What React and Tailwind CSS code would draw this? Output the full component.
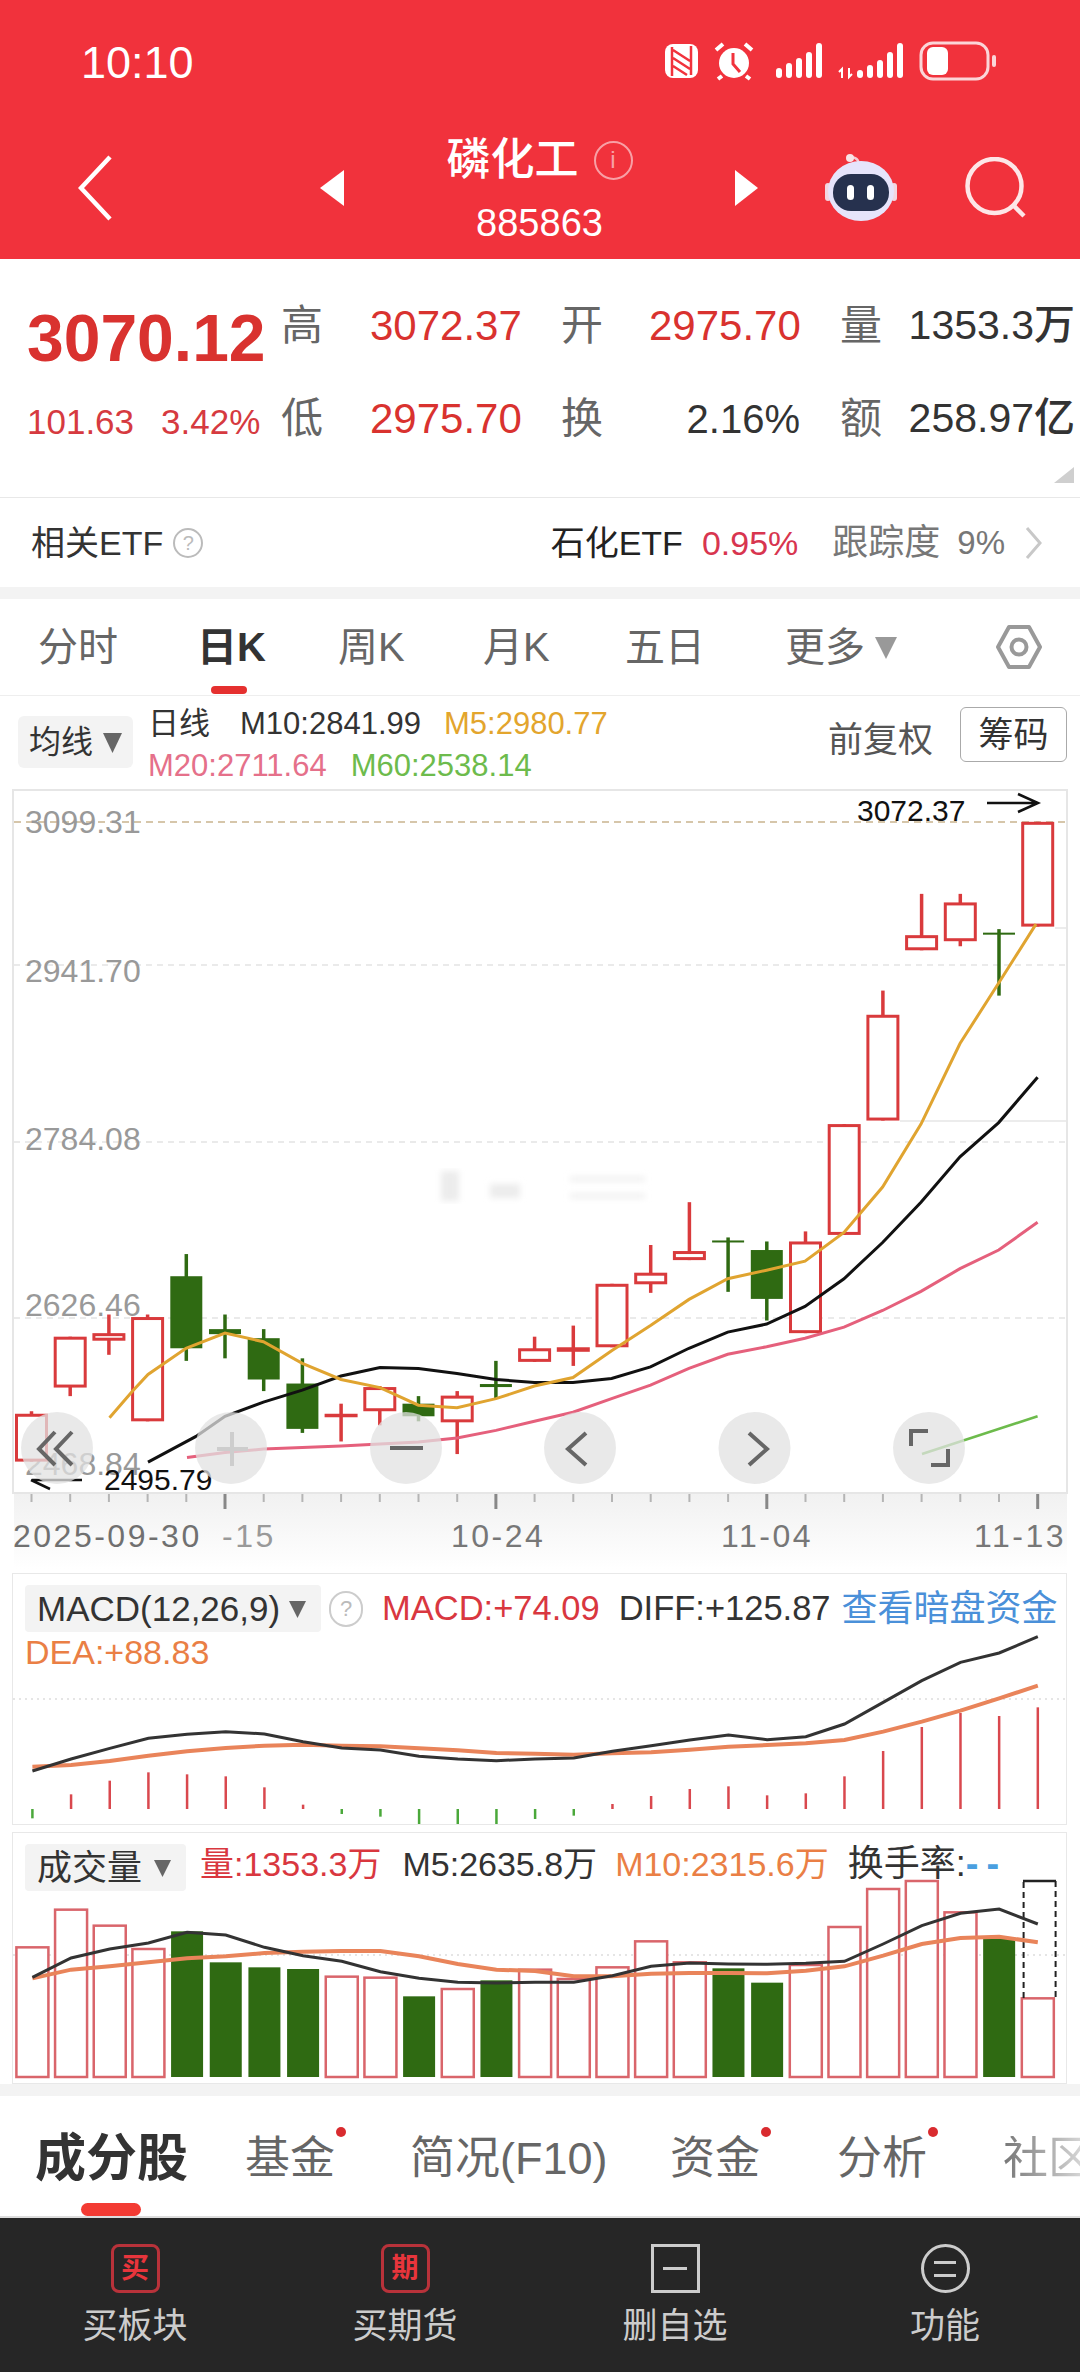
const RED = "#d93a3c";
const GREEN = "#2f6a12";

// y on the k-line chart, measured from the chart top in a 1.985x crop
const ky = (z) => 780 + z / 1.985;
const kx = (i) => 31.5 + 38.7 * i;
// lower panels share the same x grid
const px = (i) => 32.4 + 38.67 * i;
const py = (z) => 1560 + z / 3;

// [bodyTop, bodyBottom, wickTop, wickBottom, up]
const candles = [
  [1260, 1355, 1255, 1355, 1],
  [1107, 1208, 1107, 1225, 1],
  [1100, 1115, 1063, 1143, 1],
  [1068, 1275, 1063, 1275, 1],
  [987, 1130, 943, 1155, 0],
  [1092, 1102, 1063, 1150, 0],
  [1110, 1192, 1092, 1215, 0],
  [1200, 1290, 1150, 1298, 0],
  [1260, 1265, 1240, 1315, 1],
  [1207, 1255, 1205, 1283, 1],
  [1240, 1265, 1225, 1275, 0],
  [1224, 1277, 1215, 1340, 1],
  [1201, 1207, 1155, 1230, 0],
  [1130, 1157, 1107, 1157, 1],
  [1128, 1137, 1085, 1165, 1],
  [1002, 1128, 1002, 1128, 1],
  [980, 1003, 925, 1020, 1],
  [937, 955, 840, 955, 1],
  [916, 920, 910, 1018, 0],
  [935, 1032, 918, 1075, 0],
  [918, 1100, 898, 1100, 1],
  [685, 905, 685, 905, 1],
  [468, 678, 420, 678, 1],
  [310, 340, 228, 340, 1],
  [245, 322, 228, 332, 1],
  [305, 309, 298, 430, 0],
  [85, 293, 85, 293, 1],
];

const m5 = [
  [109.5, 1268], [132.6, 1215], [148, 1182], [186, 1130], [225, 1100], [263.4, 1117], [302.3, 1160], [341, 1192], [380, 1208], [418.4, 1243], [457, 1248], [496, 1230], [534.4, 1205],
  [573, 1188], [611.6, 1135], [650.5, 1085], [689, 1033], [727.7, 992], [766.6, 975], [805, 957], [844, 900], [882.6, 810], [921, 685], [960, 525], [998.7, 405], [1036, 288],
];
const m10 = [
  [148, 1356], [196, 1305], [225, 1265], [263.4, 1237], [302.3, 1213], [341, 1185], [380, 1168], [418.4, 1170], [457, 1180], [496, 1192], [534.4, 1198],
  [573, 1198], [611.6, 1190], [650.5, 1167], [689, 1130], [727.7, 1098], [766.6, 1082], [805, 1047], [844, 992], [882.6, 920], [921, 840], [960, 750], [998.7, 682], [1037.6, 592],
];
const m20 = [
  [187, 1347], [225, 1337], [263.4, 1330], [302.3, 1327], [341, 1324], [380, 1320], [418.4, 1316], [457, 1308], [496, 1293], [534.4, 1275],
  [573, 1257], [611.6, 1230], [650.5, 1203], [689, 1170], [727.7, 1142], [766.6, 1127], [805, 1110], [844, 1088], [882.6, 1055], [921, 1017], [960, 972], [998.7, 935], [1037.6, 880],
];
const m60 = [[922, 1340], [1037.6, 1265]];

const macdBars = [-28, 44, 85, 110, 104, 98, 65, 13, -15, -23, -45, -45, -45, -30, -20, 15, 39, 60, 68, 41, 47, 98, 174, 246, 288, 279, 305];
const diff = [636, 600, 568, 538, 526, 518, 525, 548, 567, 573, 592, 600, 605, 600, 597, 577, 560, 543, 528, 542, 533, 495, 430, 365, 310, 282, 233];
const dea = [623, 618, 606, 590, 577, 567, 560, 557, 560, 562, 568, 574, 582, 584, 587, 583, 580, 572, 563, 558, 553, 543, 518, 488, 455, 418, 380];

// [top, up]
const volBars = [
  [1165, 1], [1052, 1], [1100, 1], [1170, 1], [1117, 0], [1210, 0], [1225, 0], [1230, 0], [1253, 1], [1256, 1], [1312, 0], [1290, 1], [1264, 0], [1232, 1],
  [1260, 1], [1225, 1], [1147, 1], [1210, 1], [1228, 0], [1271, 0], [1218, 1], [1104, 1], [990, 1], [966, 1], [1060, 1], [1135, 0], [1318, 1],
];
const volM5 = [1255, 1197, 1170, 1152, 1120, 1128, 1165, 1190, 1207, 1238, 1258, 1270, 1272, 1270, 1270, 1250, 1222, 1212, 1215, 1216, 1213, 1207, 1155, 1100, 1063, 1050, 1095];
const volM10 = [1258, 1232, 1222, 1210, 1198, 1192, 1182, 1178, 1176, 1176, 1192, 1215, 1232, 1236, 1252, 1252, 1244, 1242, 1242, 1243, 1235, 1222, 1190, 1155, 1137, 1133, 1150];

const kPoints = (list) => list.map(([x, z]) => `${x},${ky(z)}`).join(" ");
const panelPoints = (list) => list.map((z, i) => `${px(i)},${py(z)}`).join(" ");

function StatusBar() {
  return (
    <div className="flex h-[124px] items-center">
      <span className="ml-[81px] text-[45px] leading-none text-white">10:10</span>
      <svg className="ml-auto mr-[80px] block" width="340" height="44" viewBox="660 40 340 44">
        {/* nfc */}
        <rect x="665" y="44" width="33" height="34" rx="8" fill="#fff" />
        <path d="M672 76V47M691 75V46M673 50l17 11M673 58l17 11M673 66l14 9" stroke="#f1323c" strokeWidth="2.5" fill="none" />
        {/* alarm */}
        <circle cx="734" cy="63" r="15" fill="#fff" />
        <path d="M733 53v11l7 8" stroke="#f1323c" strokeWidth="3" fill="none" />
        <path d="M716 50l7-6M752 50l-7-6M722 76l-4 3M746 76l4 3" stroke="#fff" strokeWidth="4" fill="none" />
        {/* signal */}
        {[[779, 68], [789, 63], [799, 58], [809, 52], [819, 43]].map(([x, y]) => (
          <rect key={x} x={x - 3} y={y} width="6" height={78 - y} rx="3" fill="#fff" />
        ))}
        <path d="M842 78V69l-3 3M849 68v9l3-3" stroke="#fff" strokeWidth="2" fill="none" />
        {[[860, 70], [870, 65], [880, 60], [890, 52], [900, 43]].map(([x, y]) => (
          <rect key={x} x={x - 3} y={y} width="6" height={78 - y} rx="3" fill="#fff" />
        ))}
        {/* battery */}
        <rect x="921" y="43" width="67" height="36" rx="12" fill="none" stroke="#fbd5d8" strokeWidth="3" />
        <rect x="927" y="47" width="21" height="28" rx="6" fill="#fff" />
        <rect x="992" y="55" width="4" height="12" rx="2" fill="#fbd5d8" />
      </svg>
    </div>
  );
}

function RobotIcon() {
  return (
    <svg width="72" height="70" viewBox="825 150 72 70" className="block">
      <path d="M850 156c3-3 8-1 9 5" stroke="#f6c9d2" strokeWidth="2.5" fill="none" />
      <circle cx="850" cy="155" r="4" fill="#f8e3e6" />
      <rect x="825" y="180" width="6" height="18" rx="3" fill="#f3d6e0" />
      <rect x="891" y="180" width="6" height="18" rx="3" fill="#f3d6e0" />
      <ellipse cx="861" cy="188" rx="33" ry="30" fill="#e6e4fb" />
      <rect x="833" y="171" width="56" height="37" rx="18" fill="#26314e" />
      <rect x="847" y="182" width="7" height="15" rx="3.5" fill="#fff" />
      <rect x="867" y="182" width="7" height="15" rx="3.5" fill="#fff" />
    </svg>
  );
}

function Header() {
  return (
    <div className="h-[259px] bg-[#f1323c] text-white">
      <StatusBar />
      <div className="flex h-[135px] items-center pb-[8px]">
        <svg className="ml-[78px] block" width="34" height="66" viewBox="0 0 34 66">
          <path d="M32 2L3 33l29 31" fill="none" stroke="#fff" strokeWidth="4.5" />
        </svg>
        <svg className="ml-[208px] block" width="24" height="36" viewBox="0 0 24 36">
          <path d="M24 0v36L0 18z" fill="#fff" />
        </svg>
        <div className="flex w-[391px] flex-col items-center self-start pt-[11px]">
          <div className="flex h-[50px] items-center">
            <span className="text-[44px] font-medium leading-none">磷化工</span>
            <span className="ml-[15px] flex h-[39px] w-[39px] items-center justify-center rounded-full border-2 border-[#f8a0a6] text-[24px] leading-none text-[#f8a0a6]">
              i
            </span>
          </div>
          <span className="mt-[13px] text-[38px] leading-[50px]">885863</span>
        </div>
        <svg className="block" width="23" height="36" viewBox="0 0 23 36">
          <path d="M0 0v36l23-18z" fill="#fff" />
        </svg>
        <div className="ml-[67px]">
          <RobotIcon />
        </div>
        <svg className="ml-[68px] block" width="62" height="62" viewBox="0 0 62 62">
          <circle cx="29.5" cy="29" r="27" fill="none" stroke="#fde6e7" strokeWidth="4.5" />
          <path d="M48 48l11 11" stroke="#fde6e7" strokeWidth="4.5" />
        </svg>
      </div>
    </div>
  );
}

function Stat({ label, value, color, width = "w-[151px]", size = "text-[42px]" }) {
  return (
    <>
      <span className="text-[42px] leading-none text-[#666]">{label}</span>
      <span className={`${width} text-right ${size} font-medium leading-none ${color}`}>{value}</span>
    </>
  );
}

function Stats() {
  return (
    <div className="relative flex h-[239px] border-b border-[#e8e8e8]">
      <div className="ml-[27px] w-[254px] pt-[44px]">
        <div className="text-[66px] font-bold leading-[70px] text-[#d9322f]">3070.12</div>
        <div className="mt-[27px] flex text-[35px] font-medium leading-[44px] text-[#d63a40]">
          <span>101.63</span>
          <span className="ml-[27px]">3.42%</span>
        </div>
      </div>
      <div className="grid h-[206px] grid-cols-[89px_151px_40px_88px_151px_40px_60px_175px] grid-rows-2 items-center pt-[20px]">
        <Stat label="高" value="3072.37" color="text-[#d9322f]" />
        <span />
        <Stat label="开" value="2975.70" color="text-[#d9322f]" />
        <span />
        <Stat label="量" value="1353.3万" color="text-[#333]" width="w-[175px]" size="text-[41px]" />
        <Stat label="低" value="2975.70" color="text-[#d9322f]" />
        <span />
        <Stat label="换" value="2.16%" color="text-[#333]" size="text-[40px]" />
        <span />
        <Stat label="额" value="258.97亿" color="text-[#333]" width="w-[175px]" size="text-[41px]" />
      </div>
      <svg className="absolute bottom-[14px] right-[6px] block" width="20" height="16" viewBox="0 0 20 16">
        <path d="M20 0v16H0z" fill="#cfcfcf" />
      </svg>
    </div>
  );
}

function EtfRow() {
  return (
    <div className="flex h-[89px] items-center pl-[31px] pr-[38px]">
      <span className="text-[34px] leading-none text-[#333]">相关ETF</span>
      <span className="ml-[10px] flex h-[30px] w-[30px] items-center justify-center rounded-full border-2 border-[#bbb] text-[20px] leading-none text-[#bbb]">
        ?
      </span>
      <span className="ml-auto text-[34px] leading-none text-[#222]">石化ETF</span>
      <span className="ml-[19px] text-[34px] leading-none text-[#d8354f]">0.95%</span>
      <span className="ml-[34px] text-[36px] leading-none text-[#777]">跟踪度</span>
      <span className="ml-[17px] text-[33px] leading-none text-[#777]">9%</span>
      <svg className="ml-[20px] block" width="17" height="32" viewBox="0 0 17 32">
        <path d="M2 1l13 15L2 31" fill="none" stroke="#c8c8c8" strokeWidth="3" />
      </svg>
    </div>
  );
}

function PeriodTabs() {
  const tabs = [
    ["分时", "w-[159px]"],
    ["日K", "w-[141px]"],
    ["周K", "w-[145px]"],
    ["月K", "w-[142px]"],
    ["五日", "w-[160px]"],
  ];
  return (
    <div className="flex h-[97px] items-center border-b border-[#eee] pl-[38px]">
      {tabs.map(([name, w]) => (
        <span
          key={name}
          className={`relative ${w} text-[40px] leading-none ${name === "日K" ? "font-bold text-[#333]" : "text-[#666]"}`}
        >
          {name}
          {name === "日K" && (
            <span className="absolute left-[14px] top-[59px] h-[8px] w-[36px] rounded-full bg-[#e5302f]" />
          )}
        </span>
      ))}
      <span className="text-[40px] leading-none text-[#666]">更多</span>
      <svg className="ml-[10px] block" width="22" height="24" viewBox="0 0 22 24">
        <path d="M0 2h22L11 24z" fill="#999" />
      </svg>
      <svg className="ml-[98px] block" width="48" height="46" viewBox="0 0 48 46">
        <path d="M14 3h20l11 20-11 20H14L3 23z" fill="none" stroke="#999" strokeWidth="4" strokeLinejoin="round" />
        <circle cx="24" cy="23" r="7.5" fill="none" stroke="#999" strokeWidth="4" />
      </svg>
    </div>
  );
}

function Legend() {
  return (
    <div className="flex h-[83px] items-start pl-[18px] pr-[13px]">
      <div className="mt-[20px] flex h-[52px] w-[115px] items-center rounded-[6px] bg-[#f3f3f3] pl-[11px]">
        <span className="text-[32px] leading-none text-[#333]">均线</span>
        <svg className="ml-[10px] block" width="19" height="22" viewBox="0 0 19 22">
          <path d="M0 2h19L9.5 22z" fill="#666" />
        </svg>
      </div>
      <div className="ml-[15px] mt-[7px] text-[31px] leading-[42px]">
        <div className="flex">
          <span className="w-[92px] text-[#333]">日线</span>
          <span className="text-[#333]">M10:2841.99</span>
          <span className="ml-[23px] text-[#e3a52d]">M5:2980.77</span>
        </div>
        <div className="flex">
          <span className="text-[#e5708a]">M20:2711.64</span>
          <span className="ml-[24px] text-[#6dbb4c]">M60:2538.14</span>
        </div>
      </div>
      <span className="ml-auto mt-[26px] text-[35px] leading-none text-[#555]">前复权</span>
      <span className="ml-[27px] mt-[11px] flex h-[55px] w-[107px] items-center justify-center rounded-[6px] border border-[#aaa] text-[35px] leading-none text-[#333]">
        筹码
      </span>
    </div>
  );
}

function KChart() {
  const gridY = [966, 1143, 1319];
  const axisLabels = [
    ["3099.31", 834],
    ["2941.70", 983],
    ["2784.08", 1151],
    ["2626.46", 1317],
    ["2468.84", 1476],
  ];
  return (
    <svg className="block" width="1080" height="794" viewBox="0 780 1080 794">
      <defs>
        <linearGradient id="axisBand" x1="0" y1="0" x2="0" y2="1">
          <stop offset="0" stopColor="#f1f1f1" />
          <stop offset="1" stopColor="#fff" />
        </linearGradient>
        <filter id="soft">
          <feGaussianBlur stdDeviation="3" />
        </filter>
      </defs>

      <rect x="13" y="791" width="1054" height="703" fill="#fff" stroke="#e6e6e6" strokeWidth="2" />
      <rect x="14" y="1495" width="1053" height="75" fill="url(#axisBand)" />

      <line x1="14" x2="1066" y1="823" y2="823" stroke="#c9b48e" strokeWidth="1.5" strokeDasharray="7 5" />
      {gridY.map((y) => (
        <line key={y} x1="14" x2="1066" y1={y} y2={y} stroke="#e4e4e4" strokeWidth="1.5" strokeDasharray="6 5" />
      ))}
      <line x1="900" x2="1066" y1="1122" y2="1122" stroke="#e6e6e6" strokeWidth="1.5" />
      <line x1="1055" x2="1066" y1="929" y2="929" stroke="#e6e6e6" strokeWidth="1.5" />

      <g filter="url(#soft)" fill="#ececec">
        <rect x="441" y="1172" width="18" height="30" />
        <rect x="490" y="1185" width="30" height="14" />
        <rect x="570" y="1178" width="75" height="4" />
        <rect x="570" y="1195" width="75" height="4" />
      </g>

      {axisLabels.map(([label, y]) => (
        <text key={label} x="25" y={y} className="fill-[#999] text-[32px] font-medium">
          {label}
        </text>
      ))}

      {candles.map(([top, bottom, high, low, up], i) => {
        const x = kx(i);
        if (!up) {
          return (
            <g key={i}>
              <line x1={x} x2={x} y1={ky(high)} y2={ky(low)} stroke={GREEN} strokeWidth="3.5" />
              <rect x={x - 16} y={ky(top)} width="32" height={ky(bottom) - ky(top)} fill={GREEN} />
            </g>
          );
        }
        return (
          <g key={i}>
            <line x1={x} x2={x} y1={ky(high)} y2={ky(low)} stroke={RED} strokeWidth="3.5" />
            <rect
              x={x - 15}
              y={ky(top) + 1.5}
              width="30"
              height={Math.max(ky(bottom) - ky(top) - 3, 0.5)}
              fill="#fff"
              stroke={RED}
              strokeWidth="3"
            />
          </g>
        );
      })}

      <polyline points={kPoints(m60)} fill="none" stroke="#6dbb4c" strokeWidth="2.5" />
      <polyline points={kPoints(m20)} fill="none" stroke="#e5607c" strokeWidth="3" />
      <polyline points={kPoints(m10)} fill="none" stroke="#111" strokeWidth="3" />
      <polyline points={kPoints(m5)} fill="none" stroke="#e0a430" strokeWidth="3" />

      <text x="857" y="822" className="fill-[#111] text-[30px]">3072.37</text>
      <path d="M987 804h51M1018 795l20 9-20 9" fill="none" stroke="#111" strokeWidth="2.5" />
      <text x="104" y="1491" className="fill-[#111] text-[30px]">2495.79</text>
      <path d="M82 1481H32M50 1490l-19-9" fill="none" stroke="#111" strokeWidth="2.5" />

      {[57, 231, 406, 580, 754.5, 929].map((x) => (
        <circle key={x} cx={x} cy="1449" r="36" fill="#e2e2e2" fillOpacity="0.75" />
      ))}
      <g fill="none" stroke="#666" strokeWidth="4">
        <path d="M55 1433l-16 17 16 16M72 1433l-16 17 16 16" />
        <path d="M217 1450h31M232 1433v34" stroke="#cdcdcd" />
        <path d="M390 1449h33" />
        <path d="M586 1434l-18 16 18 16M749 1434l18 16-18 16" />
        <path d="M911 1447v-15h17M931 1466h17v-16" />
      </g>

      {candles.map((_, i) => {
        const major = i === 5 || i === 12 || i === 19 || i === 26;
        return (
          <line
            key={i}
            x1={kx(i)}
            x2={kx(i)}
            y1="1495"
            y2={major ? 1510 : 1503}
            stroke={major ? "#888" : "#b5b5b5"}
            strokeWidth={major ? 3 : 2}
          />
        );
      })}
      <g className="text-[32px] font-medium tracking-[2.5px]">
        <text x="13" y="1548" className="fill-[#707070]">2025-09-30</text>
        <text x="222" y="1548" className="fill-[#999]">-15</text>
        <text x="451" y="1548" className="fill-[#777]">10-24</text>
        <text x="721" y="1548" className="fill-[#777]">11-04</text>
        <text x="974" y="1548" className="fill-[#777]">11-13</text>
      </g>
    </svg>
  );
}

function Dropdown({ width, children }) {
  return (
    <div className={`flex h-[47px] ${width} items-center justify-between rounded-[4px] bg-[#f3f3f3] pl-[12px] pr-[15px]`}>
      <span className="text-[35px] leading-none text-[#333]">{children}</span>
      <svg className="block" width="17" height="18" viewBox="0 0 17 18">
        <path d="M0 1h17L8.5 18z" fill="#666" />
      </svg>
    </div>
  );
}

function MacdPanel() {
  return (
    <div className="relative mx-[12px] h-[252px] w-[1055px] border border-[#e8e8e8]">
      <svg className="absolute inset-0 block" width="1053" height="250" viewBox="13 1575 1053 250">
        <line x1="13" x2="1066" y1="1700" y2="1700" stroke="#ddd" strokeWidth="1.5" strokeDasharray="2 4" />
        {macdBars.map((h, i) => (
          <line
            key={i}
            x1={px(i)}
            x2={px(i)}
            y1="1810"
            y2={1810 - h / 3}
            stroke={h > 0 ? "#d9484e" : "#4aa83a"}
            strokeWidth="2.5"
          />
        ))}
        <polyline points={panelPoints(dea)} fill="none" stroke="#e9845a" strokeWidth="4" />
        <polyline points={panelPoints(diff)} fill="none" stroke="#333" strokeWidth="3" />
      </svg>
      <div className="relative pl-[12px] pt-[11px]">
        <div className="flex items-center">
          <Dropdown width="w-[296px]">MACD(12,26,9)</Dropdown>
          <span className="ml-[8px] flex h-[36px] w-[34px] items-center justify-center rounded-full border-2 border-[#ccc] text-[22px] leading-none text-[#bbb]">
            ?
          </span>
          <span className="ml-[19px] text-[34.5px] leading-none text-[#d9373f]">MACD:+74.09</span>
          <span className="ml-[19px] text-[34.5px] leading-none text-[#333]">DIFF:+125.87</span>
          <span className="ml-[11px] text-[36px] leading-none text-[#4a90d9]">查看暗盘资金</span>
        </div>
        <div className="mt-[2px] text-[34px] leading-[36px] text-[#ea7f45]">DEA:+88.83</div>
      </div>
    </div>
  );
}

function VolumePanel() {
  return (
    <div className="relative mx-[12px] mt-[7px] h-[252px] w-[1055px] border border-[#e8e8e8]">
      <svg className="absolute inset-0 block" width="1053" height="250" viewBox="13 1834 1053 250">
        <line x1="13" x2="1066" y1="1956" y2="1956" stroke="#ddd" strokeWidth="1.5" strokeDasharray="2 4" />
        {volBars.map(([top, up], i) => (
          <rect
            key={i}
            x={px(i) - 16}
            y={py(top)}
            width="32"
            height={2078 - py(top)}
            fill={up ? "#fff" : GREEN}
            stroke={up ? "#d9656b" : GREEN}
            strokeWidth={up ? 2.5 : 0}
          />
        ))}
        <path d="M1023.6 1999V1882M1055.6 1882V1999" fill="none" stroke="#222" strokeWidth="2" strokeDasharray="6 4" />
        <line x1="1023" x2="1056" y1="1882" y2="1882" stroke="#222" strokeWidth="2.5" />
        <polyline points={panelPoints(volM10)} fill="none" stroke="#e9845a" strokeWidth="4" />
        <polyline points={panelPoints(volM5)} fill="none" stroke="#333" strokeWidth="3" />
      </svg>
      <div className="relative flex items-start pl-[12px] pt-[11px]">
        <Dropdown width="w-[161px]">成交量</Dropdown>
        <div className="ml-[14px] flex pt-[2px] text-[34px] leading-[36px]">
          <span className="text-[#d9373f]">量:1353.3万</span>
          <span className="ml-[21px] text-[#333]">M5:2635.8万</span>
          <span className="ml-[18px] text-[#ea7f45]">M10:2315.6万</span>
          <span className="ml-[19px] text-[36px] text-[#333]">换手率:</span>
          <span className="text-[38px] font-bold tracking-[8px] text-[#4a9fe0]">--</span>
        </div>
      </div>
    </div>
  );
}

function InfoTabs() {
  const tabs = [
    ["基金", "w-[165px]", true],
    ["简况(F10)", "w-[260px]", false],
    ["资金", "w-[167px]", true],
    ["分析", "w-[166px]", true],
  ];
  return (
    <div className="relative flex h-[122px] items-center overflow-hidden border-b-2 border-[#ddd] pl-[35px] pt-[4px]">
      <span className="w-[210px] shrink-0 text-[51px] font-bold leading-none text-[#333]">成分股</span>
      {tabs.map(([name, w, dot]) => (
        <span key={name} className={`relative shrink-0 ${w} text-[45px] leading-none text-[#666]`}>
          {name}
          {dot && <span className="absolute left-[91px] top-[-9px] h-[10px] w-[10px] rounded-full bg-[#d92b2f]" />}
        </span>
      ))}
      <span className="shrink-0 bg-linear-to-r from-[#777] to-[#e5e5e5] bg-clip-text text-[45px] leading-none text-transparent">
        社区
      </span>
      <span className="absolute bottom-0 left-[81px] h-[13px] w-[60px] rounded-full bg-[#f33b33]" />
    </div>
  );
}

function BottomNav() {
  const boxed = "flex h-[49px] w-[49px] items-center justify-center";
  return (
    <div className="grid h-[154px] grid-cols-4 bg-[#262626] pt-[26px] text-[#ccc]">
      <div className="flex flex-col items-center">
        <span className={`${boxed} rounded-[8px] border-[3px] border-[#b8323a] text-[28px] font-bold leading-none text-[#e8353c]`}>买</span>
        <span className="mt-[13px] text-[35px] leading-[40px]">买板块</span>
      </div>
      <div className="flex flex-col items-center">
        <span className={`${boxed} rounded-[8px] border-[3px] border-[#b8323a] text-[27px] font-bold leading-none text-[#e8353c]`}>期</span>
        <span className="mt-[13px] text-[35px] leading-[40px]">买期货</span>
      </div>
      <div className="flex flex-col items-center">
        <span className={`${boxed} border-[3px] border-[#ccc]`}>
          <span className="h-[3px] w-[24px] bg-[#ccc]" />
        </span>
        <span className="mt-[13px] text-[35px] leading-[40px]">删自选</span>
      </div>
      <div className="flex flex-col items-center">
        <span className={`${boxed} flex-col gap-[10px] rounded-full border-[3px] border-[#ccc]`}>
          <span className="h-[3px] w-[22px] bg-[#ccc]" />
          <span className="h-[3px] w-[22px] bg-[#ccc]" />
        </span>
        <span className="mt-[13px] text-[35px] leading-[40px]">功能</span>
      </div>
    </div>
  );
}

export default function App() {
  return (
    <div className="h-[2373px] w-[1080px] overflow-hidden bg-white font-['Liberation_Sans','Noto_Sans_CJK_SC',sans-serif]">
      <Header />
      <Stats />
      <EtfRow />
      <div className="h-[12px] bg-[#f3f3f3]" />
      <PeriodTabs />
      <Legend />
      <KChart />
      <MacdPanel />
      <VolumePanel />
      <div className="h-[12px] bg-[#f3f3f3]" />
      <InfoTabs />
      <BottomNav />
    </div>
  );
}
